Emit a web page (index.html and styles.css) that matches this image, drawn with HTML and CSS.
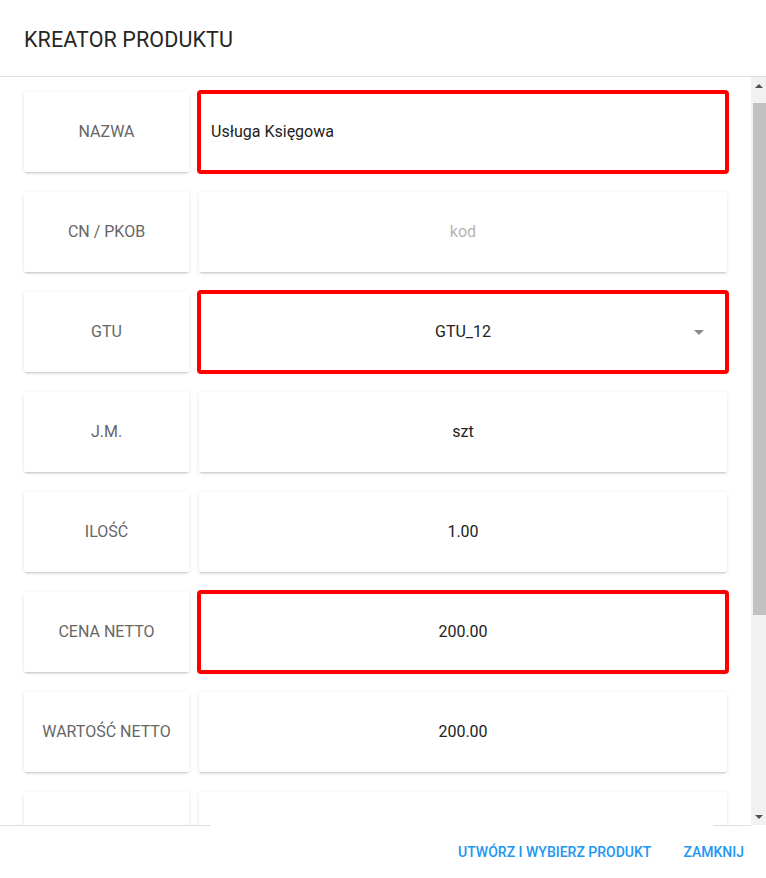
FILE: index.html
```html
<!DOCTYPE html>
<html lang="pl">
<head>
<meta charset="utf-8">
<title>Kreator produktu</title>
<link rel="stylesheet" href="styles.css">
</head>
<body>
<div class="dialog">
  <header class="dialog-header">
    <h1 class="dialog-title">KREATOR PRODUKTU</h1>
  </header>
  <div class="dialog-middle">
    <div class="dialog-content">
      <div class="row">
        <div class="card label">NAZWA</div>
        <div class="card value left error">Usługa Księgowa</div>
      </div>
      <div class="row">
        <div class="card label">CN / PKOB</div>
        <div class="card value placeholder">kod</div>
      </div>
      <div class="row">
        <div class="card label">GTU</div>
        <div class="card value error select">GTU_12<span class="caret"></span></div>
      </div>
      <div class="row">
        <div class="card label">J.M.</div>
        <div class="card value">szt</div>
      </div>
      <div class="row">
        <div class="card label">ILOŚĆ</div>
        <div class="card value">1.00</div>
      </div>
      <div class="row">
        <div class="card label">CENA NETTO</div>
        <div class="card value error">200.00</div>
      </div>
      <div class="row">
        <div class="card label">WARTOŚĆ NETTO</div>
        <div class="card value">200.00</div>
      </div>
      <div class="row">
        <div class="card label">STAWKA VAT</div>
        <div class="card value">23%</div>
      </div>
    </div>
    <div class="scrollbar">
      <div class="sb-btn"><span class="sb-up"></span></div>
      <div class="sb-track"><div class="sb-thumb"></div></div>
      <div class="sb-btn"><span class="sb-down"></span></div>
    </div>
  </div>
  <footer class="dialog-footer">
    <button class="btn">UTWÓRZ I WYBIERZ PRODUKT</button>
    <button class="btn">ZAMKNIJ</button>
  </footer>
</div>
</body>
</html>
```
FILE: styles.css
```css
html, body {
  margin: 0;
  padding: 0;
  background: #ffffff;
}
body {
  font-family: Roboto, "Liberation Sans", Arial, sans-serif;
  color: #212121;
}
.dialog {
  width: 766px;
  height: 878px;
  display: flex;
  flex-direction: column;
  background: #fff;
  overflow: hidden;
}
.dialog-header {
  height: 73px;
  flex: 0 0 73px;
  border-bottom: 1px solid #e0e0e0;
  display: flex;
  align-items: center;
  padding: 3px 24px 0 24px;
  box-sizing: content-box;
}
.dialog-title {
  margin: 0;
  font-size: 21.5px;
  font-weight: 400;
  letter-spacing: 0.1px;
  color: #262626;
}
.dialog-middle {
  flex: 1 1 auto;
  min-height: 0;
  display: flex;
}
.dialog-content {
  flex: 1 1 auto;
  overflow: hidden;
  padding: 15px 24px 0 24px;
  display: flex;
  flex-direction: column;
  gap: 20px;
}
.row {
  display: flex;
  gap: 10px;
  flex: 0 0 80px;
  height: 80px;
}
.card {
  background: #fff;
  box-shadow: 0 2px 2px -1px rgba(0,0,0,0.18), 0 1px 4px 0 rgba(0,0,0,0.10);
  border-radius: 2px;
  display: flex;
  align-items: center;
  justify-content: center;
  font-size: 16px;
  padding-bottom: 2px;
  box-sizing: border-box;
}
.label {
  width: 165px;
  flex: 0 0 165px;
  color: #666;
}
.value {
  flex: 1 1 auto;
  color: #222;
  position: relative;
}
.value.left {
  justify-content: flex-start;
  padding-left: 12px;
}
.placeholder {
  color: #b5b5b5;
}
.error {
  outline: 4px solid #ff0000;
  outline-offset: -2px;
}
.caret {
  position: absolute;
  right: 23px;
  top: 38px;
  width: 0;
  height: 0;
  border-left: 5px solid transparent;
  border-right: 5px solid transparent;
  border-top: 5px solid #8a8a8a;
}
.scrollbar {
  width: 15px;
  flex: 0 0 15px;
  background: #f1f1f1;
  display: flex;
  flex-direction: column;
}
.sb-btn {
  height: 17px;
  flex: 0 0 17px;
  display: flex;
  align-items: center;
  justify-content: center;
}
.sb-up {
  width: 0; height: 0;
  border-left: 4px solid transparent;
  border-right: 4px solid transparent;
  border-bottom: 4px solid #505050;
}
.sb-down {
  width: 0; height: 0;
  border-left: 4px solid transparent;
  border-right: 4px solid transparent;
  border-top: 4px solid #505050;
}
.sb-track {
  flex: 1 1 auto;
  padding: 9px 0 0 2px;
}
.sb-thumb {
  width: 13px;
  height: 512px;
  background: #c1c1c1;
}
.dialog-footer {
  flex: 0 0 53px;
  height: 53px;
  box-sizing: border-box;
  padding: 1px 6px 0 6px;
  background-image: linear-gradient(to right, #e0e0e0 0, #e0e0e0 211px, transparent 211px, transparent 713px, #e0e0e0 713px, #e0e0e0 751px, transparent 751px);
  background-size: 100% 1px;
  background-repeat: no-repeat;
  background-position: 0 0;
  display: flex;
  justify-content: flex-end;
  align-items: center;
}
.btn {
  background: none;
  border: none;
  font-family: Roboto, "Liberation Sans", Arial, sans-serif;
  font-size: 14px;
  font-weight: 500;
  color: #2196f3;
  padding: 0 16px;
  height: 36px;
  cursor: pointer;
}
```
